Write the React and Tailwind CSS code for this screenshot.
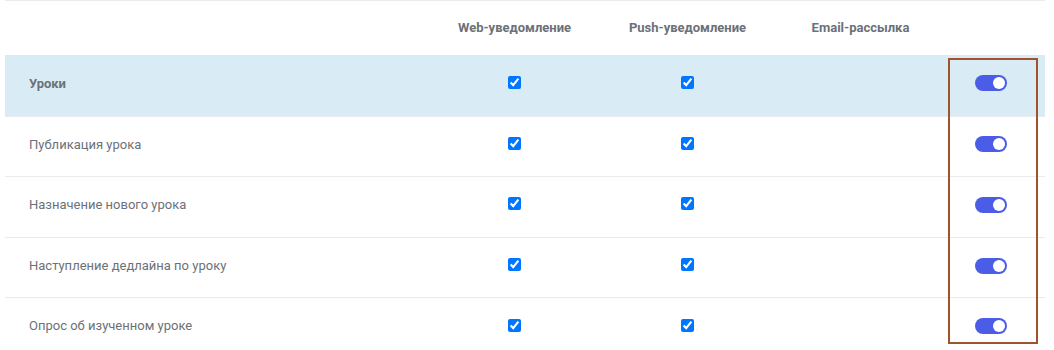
import React from "react"

const rows = [
  { label: "Уроки", group: true },
  { label: "Публикация урока" },
  { label: "Назначение нового урока" },
  { label: "Наступление дедлайна по уроку" },
  { label: "Опрос об изученном уроке" },
]

const cols = "grid grid-cols-[423px_173px_173px_173px_88px_10px] items-center"

const Check = () => (
  <input type="checkbox" checked readOnly className="w-[13px] h-[13px] m-0 accent-[#0075ff]" />
)

const Toggle = () => (
  <div className="w-[32px] h-[16px] rounded-full bg-[#4b5de6] flex items-center justify-end px-[2px]">
    <div className="w-[12px] h-[12px] rounded-full bg-white" />
  </div>
)

export default function App() {
  return (
    <div className="relative w-[1054px] h-[350px] bg-white overflow-hidden font-['Roboto',sans-serif]">
      <div className="ml-[5px] w-[1040px] border-t border-[#e9ecef]">
        <div className={`${cols} h-[54px] text-[13px] font-bold text-[#6c7178]`}>
          <div />
          <div className="text-center">Web-уведомление</div>
          <div className="text-center">Push-уведомление</div>
          <div className="text-center">Email-рассылка</div>
          <div />
          <div />
        </div>
        {rows.map((r, i) => (
          <div
            key={r.label}
            className={`${cols} h-[60.6px] pb-[4px] text-[13px] text-[#6c7178] ${i === 0 ? "bg-[#d9ebf5]" : "border-t border-[#e9ecef]"}`}
          >
            <div className={`pl-[24px] ${r.group ? "font-bold" : ""}`}>{r.label}</div>
            <div className="flex justify-center -mt-[2px]"><Check /></div>
            <div className="flex justify-center -mt-[2px]"><Check /></div>
            <div />
            <div className="flex justify-center"><Toggle /></div>
            <div />
          </div>
        ))}
      </div>
      <div className="absolute left-[948px] top-[58px] w-[90px] h-[286px] border-2 border-[#a0522d]" />
    </div>
  )
}
